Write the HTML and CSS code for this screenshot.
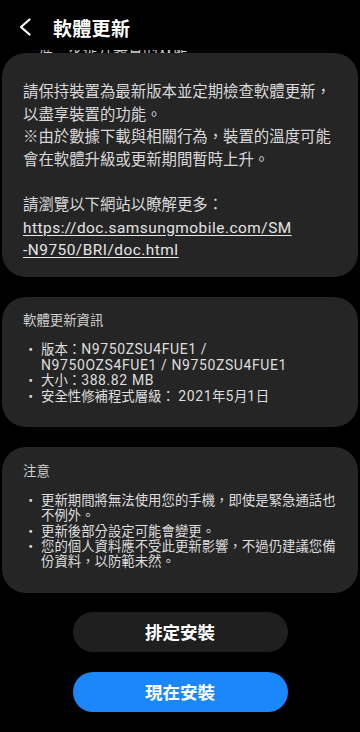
FILE: index.html
```html
<!DOCTYPE html>
<html lang="zh-Hant">
<head>
<meta charset="utf-8">
<meta name="viewport" content="width=360">
<link rel="stylesheet" href="styles.css">
</head>
<body>
<header class="header">
  <svg class="back" width="16" height="20" viewBox="0 0 16 20"><path d="M12.5 2.5 L4 10 L12.5 17.5" fill="none" stroke="#fff" stroke-width="2.2" stroke-linecap="round" stroke-linejoin="round"/></svg>
  <h1 class="title">軟體更新</h1>
</header>
<div class="peek"><span>進一步提升裝置的效能</span></div>
<main class="content">
  <section class="card card-intro">
    <p>請保持裝置為最新版本並定期檢查軟體更新，以盡享裝置的功能。<br>※由於數據下載與相關行為，裝置的溫度可能會在軟體升級或更新期間暫時上升。</p>
    <p class="gap">請瀏覽以下網站以瞭解更多：<br><a class="link" href="#">https://doc.samsungmobile.com/SM<br>-N9750/BRI/doc.html</a></p>
  </section>
  <section class="card card-info">
    <h2 class="card-title">軟體更新資訊</h2>
    <ul class="list">
      <li><span class="dot">・</span><span>版本：<span class="lat">N9750ZSU4FUE1 /<br>N9750OZS4FUE1 / N9750ZSU4FUE1</span></span></li>
      <li><span class="dot">・</span><span>大小：<span class="lat">388.82 MB</span></span></li>
      <li><span class="dot">・</span><span>安全性修補程式層級： <span class="lat">2021</span>年<span class="lat">5</span>月<span class="lat">1</span>日</span></li>
    </ul>
  </section>
  <section class="card card-info">
    <h2 class="card-title">注意</h2>
    <ul class="list">
      <li><span class="dot">・</span><span>更新期間將無法使用您的手機，即使是緊急通話也不例外。</span></li>
      <li><span class="dot">・</span><span>更新後部分設定可能會變更。</span></li>
      <li><span class="dot">・</span><span>您的個人資料應不受此更新影響，不過仍建議您備份資料，以防範未然。</span></li>
    </ul>
  </section>
  <div class="actions">
    <button class="btn btn-dark">排定安裝</button>
    <button class="btn btn-blue">現在安裝</button>
  </div>
</main>
</body>
</html>
```
FILE: styles.css
```css
* { box-sizing: border-box; }
html, body { margin: 0; padding: 0; background: #000; }
body {
  width: 360px;
  height: 732px;
  overflow: hidden;
  font-family: Roboto, "Noto Sans CJK TC", "Noto Sans", sans-serif;
  color: #dcdcdc;
}
.header {
  height: 50px;
  display: flex;
  align-items: center;
  padding-left: 17px;
  padding-top: 4px;
}
.back { display: block; }
.title {
  margin: 0 0 0 20px;
  font-family: "Noto Sans CJK TC", sans-serif;
  font-size: 19px;
  font-weight: 700;
  color: #fff;
  letter-spacing: 0.3px;
}
.peek {
  height: 4px;
  overflow: hidden;
  padding-left: 38px;
  margin-bottom: -1px;
}
.peek span {
  display: block;
  font-family: "Noto Sans CJK TC", sans-serif;
  font-size: 15px;
  line-height: 4px;
  margin-top: -4px;
  color: #cfcfcf;
}
.content {
  display: flex;
  flex-direction: column;
  gap: 20px;
}
.card {
  margin: 0 2px;
  background: #252525;
  border-radius: 24px;
  padding: 0 20px 0 21px;
}
.card-intro {
  padding-top: 28px;
  padding-bottom: 15px;
  font-size: 15.4px;
  line-height: 22.6px;
  color: #d9d9d9;
}
.card-intro p { margin: 0; }
.card-intro .gap { margin-top: 22.6px; }
.link {
  color: #e6e6e6;
  text-decoration: underline;
  text-underline-offset: 2px;
  letter-spacing: 0.5px;
}
.card-info {
  padding-top: 14.7px;
  padding-bottom: 23px;
  font-size: 13.4px;
}
.card-title {
  margin: 0;
  font-size: 13.4px;
  line-height: 20px;
  font-weight: 400;
  color: #cfcfcf;
}
.list {
  list-style: none;
  margin: 11px 0 0;
  padding: 0;
  line-height: 15.4px;
  color: #dedede;
}
.list li { display: flex; }
.dot { flex: 0 0 18px; padding-left: 1px; }
.lat { font-size: 14px; letter-spacing: 0.6px; }
.actions {
  display: flex;
  flex-direction: column;
  align-items: center;
  gap: 20px;
  margin-top: -1px;
}
.btn {
  width: 215px;
  height: 40px;
  border: 0;
  border-radius: 20px;
  font-family: "Noto Sans CJK TC", sans-serif;
  font-size: 17.5px;
  font-weight: 700;
  color: #fff;
  padding: 0;
}
.btn-dark { background: #1f1f1f; }
.btn-blue { background: #1a88fc; }
```
